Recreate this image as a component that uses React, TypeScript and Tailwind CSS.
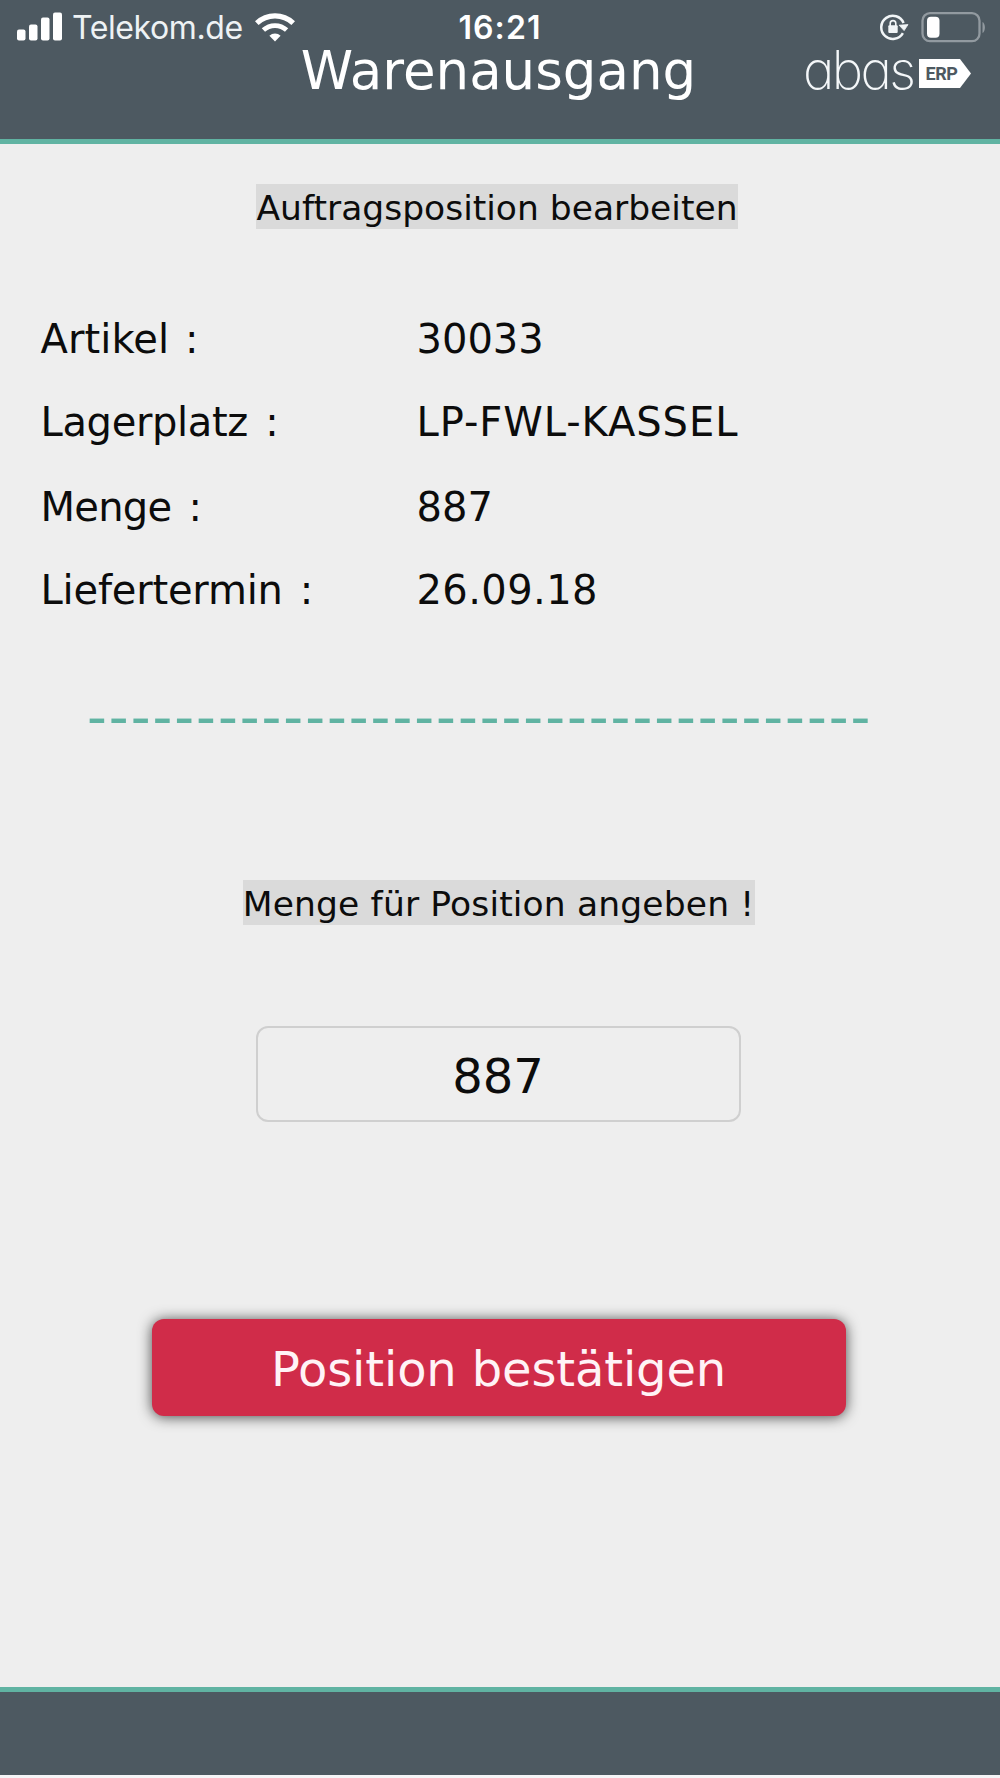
const fields = [
  { label: 'Artikel :', value: '30033', row: 'h-[83px]', labelClass: 'tracking-[0.1px] [word-spacing:3px]', valueClass: '' },
  { label: 'Lagerplatz :', value: 'LP-FWL-KASSEL', row: 'h-[83px]', labelClass: 'tracking-[-0.35px] [word-spacing:5px]', valueClass: 'tracking-[0.93px]' },
  { label: 'Menge :', value: '887', row: 'mt-0.5 h-[83px]', labelClass: 'tracking-[-0.7px] [word-spacing:5px]', valueClass: '' },
  { label: 'Liefertermin :', value: '26.09.18', row: 'h-[83px]', labelClass: 'tracking-[-0.2px] [word-spacing:4.5px]', valueClass: 'tracking-[0.4px]' },
]

function SignalIcon() {
  return (
    <svg width="46" height="30" viewBox="0 0 46 30" fill="#fff">
      <rect x="0" y="17.5" width="8.5" height="11" rx="2" />
      <rect x="12" y="12.5" width="8.5" height="16" rx="2" />
      <rect x="24" y="5.5" width="8.5" height="23" rx="2" />
      <rect x="36" y="0.5" width="9" height="28" rx="2" />
    </svg>
  )
}

function WifiIcon() {
  return (
    <svg width="40" height="30" viewBox="0 0 40 30" fill="none" stroke="#fff">
      <path d="M1.8 11.2a26.5 26.5 0 0 1 36.4 0" strokeWidth="5.2" />
      <path d="M8.4 18.1a17 17 0 0 1 23.2 0" strokeWidth="4.8" />
      <path d="M20 29.5l-5.6-5.7a8.2 8.2 0 0 1 11.2 0z" fill="#fff" stroke="none" />
    </svg>
  )
}

function RotationLockIcon() {
  return (
    <svg width="30" height="28" viewBox="0 0 30 28" fill="none">
      <path d="M23.9 20.2A11.6 11.6 0 1 1 24.6 10" stroke="#f1f5f7" strokeWidth="2.5" />
      <path d="M20.2 12.2l8.8-0.6-3.9 6z" fill="#f1f5f7" stroke="#f1f5f7" strokeWidth="0.8" />
      <rect x="9.3" y="12.2" width="9.4" height="7.8" rx="1" fill="#f1f5f7" />
      <path d="M11.2 13v-2.6a2.8 2.8 0 0 1 5.6 0V13" stroke="#f1f5f7" strokeWidth="1.6" />
    </svg>
  )
}

function BatteryIcon() {
  return (
    <svg width="65" height="32" viewBox="0 0 65 32" fill="none">
      <rect x="1.5" y="1.2" width="57" height="28" rx="7.5" stroke="#929aa0" strokeWidth="2.3" />
      <rect x="6" y="4.8" width="12.5" height="21" rx="4" fill="#fff" />
      <path d="M61.5 10c3.2 1.5 3.2 9.5 0 11z" fill="#929aa0" />
    </svg>
  )
}

function Logo() {
  return (
    <div className="flex h-[60px] items-start">
      <span className="w-[116px] pt-px font-['Inter',sans-serif] text-[53px] leading-[60px] font-extralight tracking-[-2.6px] text-[#f4f7f9] [font-feature-settings:'cv11']">
        abas
      </span>
      <span className="relative mt-[20px] h-[29px] w-[53px]">
        <svg className="absolute inset-0" width="53" height="29" viewBox="0 0 53 29">
          <path d="M0 0h41l11 14.5L41 29H0z" fill="#fff" />
        </svg>
        <span className="relative block pl-[6.5px] font-['Roboto',sans-serif] text-[18px] leading-[29px] font-bold tracking-[-0.4px] text-[#4d5961]">
          ERP
        </span>
      </span>
    </div>
  )
}

function Header() {
  return (
    <header className="relative h-36 border-b-[5px] border-[#60b3a2] bg-[#4d5961]">
      <div className="grid h-[40px] grid-cols-3 pt-3 font-['Inter',sans-serif] text-[32px] leading-8 text-white">
        <div className="flex items-start pl-[17px]">
          <SignalIcon />
          <span className="ml-[9px] tracking-[-0.4px] text-[#eef2f4]">Telekom.de</span>
          <span className="ml-3">
            <WifiIcon />
          </span>
        </div>
        <span className="text-center font-semibold tracking-[1.1px]">16:21</span>
        <div className="flex items-start justify-end pr-[14px]">
          <span className="mt-px mr-3">
            <RotationLockIcon />
          </span>
          <BatteryIcon />
        </div>
      </div>
      <h1 className="w-[997px] pt-px text-center text-[53px] leading-[60px] font-normal text-white">Warenausgang</h1>
      <div className="absolute top-[39px] left-[803px]">
        <Logo />
      </div>
    </header>
  )
}

export default function App() {
  return (
    <div className="flex h-[1778px] w-[1000px] flex-col bg-[#eee] font-['DejaVu_Sans',Verdana,sans-serif] text-[#0c0c0c]">
      <Header />

      <main className="flex w-[997px] flex-1 flex-col items-center">
        <h2 className="mt-10 mr-[3px] flex h-[45px] w-[482px] items-center justify-center bg-[#dadada] pt-[5px] text-[34.5px] whitespace-nowrap">
          Auftragsposition bearbeiten
        </h2>

        <dl className="mt-[68px] w-full pl-[40.5px] text-[40px]">
          {fields.map((field) => (
            <div key={field.label} className={`flex items-center ${field.row}`}>
              <dt className={`w-[376px] ${field.labelClass}`}>{field.label}</dt>
              <dd className={field.valueClass}>{field.value}</dd>
            </div>
          ))}
        </dl>

        <div className="mt-[56px] w-full pl-[87px] text-[55px] leading-[60px] tracking-[1.97px] whitespace-nowrap text-[#60b3a2]">
          ------------------------------------
        </div>

        <h2 className="mt-[133px] flex h-[45px] w-[512px] items-center justify-center bg-[#dadada] pt-[4px] text-[34.5px] tracking-[0.15px] whitespace-nowrap">
          Menge für Position angeben !
        </h2>

        <input
          type="text"
          defaultValue="887"
          className="mt-[101px] h-[96px] w-[485px] rounded-xl border-2 border-[#cfcfcf] bg-transparent pt-[3px] pr-px text-center text-[48px] outline-none"
        />

        <button className="mt-[197px] h-[97px] w-[694px] rounded-xl bg-[#d02c49] pt-[3px] text-[48px] tracking-[-0.15px] text-[#fff3f6] shadow-[0_1px_14px_rgba(0,0,0,0.7)]">
          Position bestätigen
        </button>
      </main>

      <footer className="h-[91px] border-t-[5px] border-b-[3px] border-t-[#60b3a2] border-b-[#f5f5f7] bg-[#4d5961]" />
    </div>
  )
}
